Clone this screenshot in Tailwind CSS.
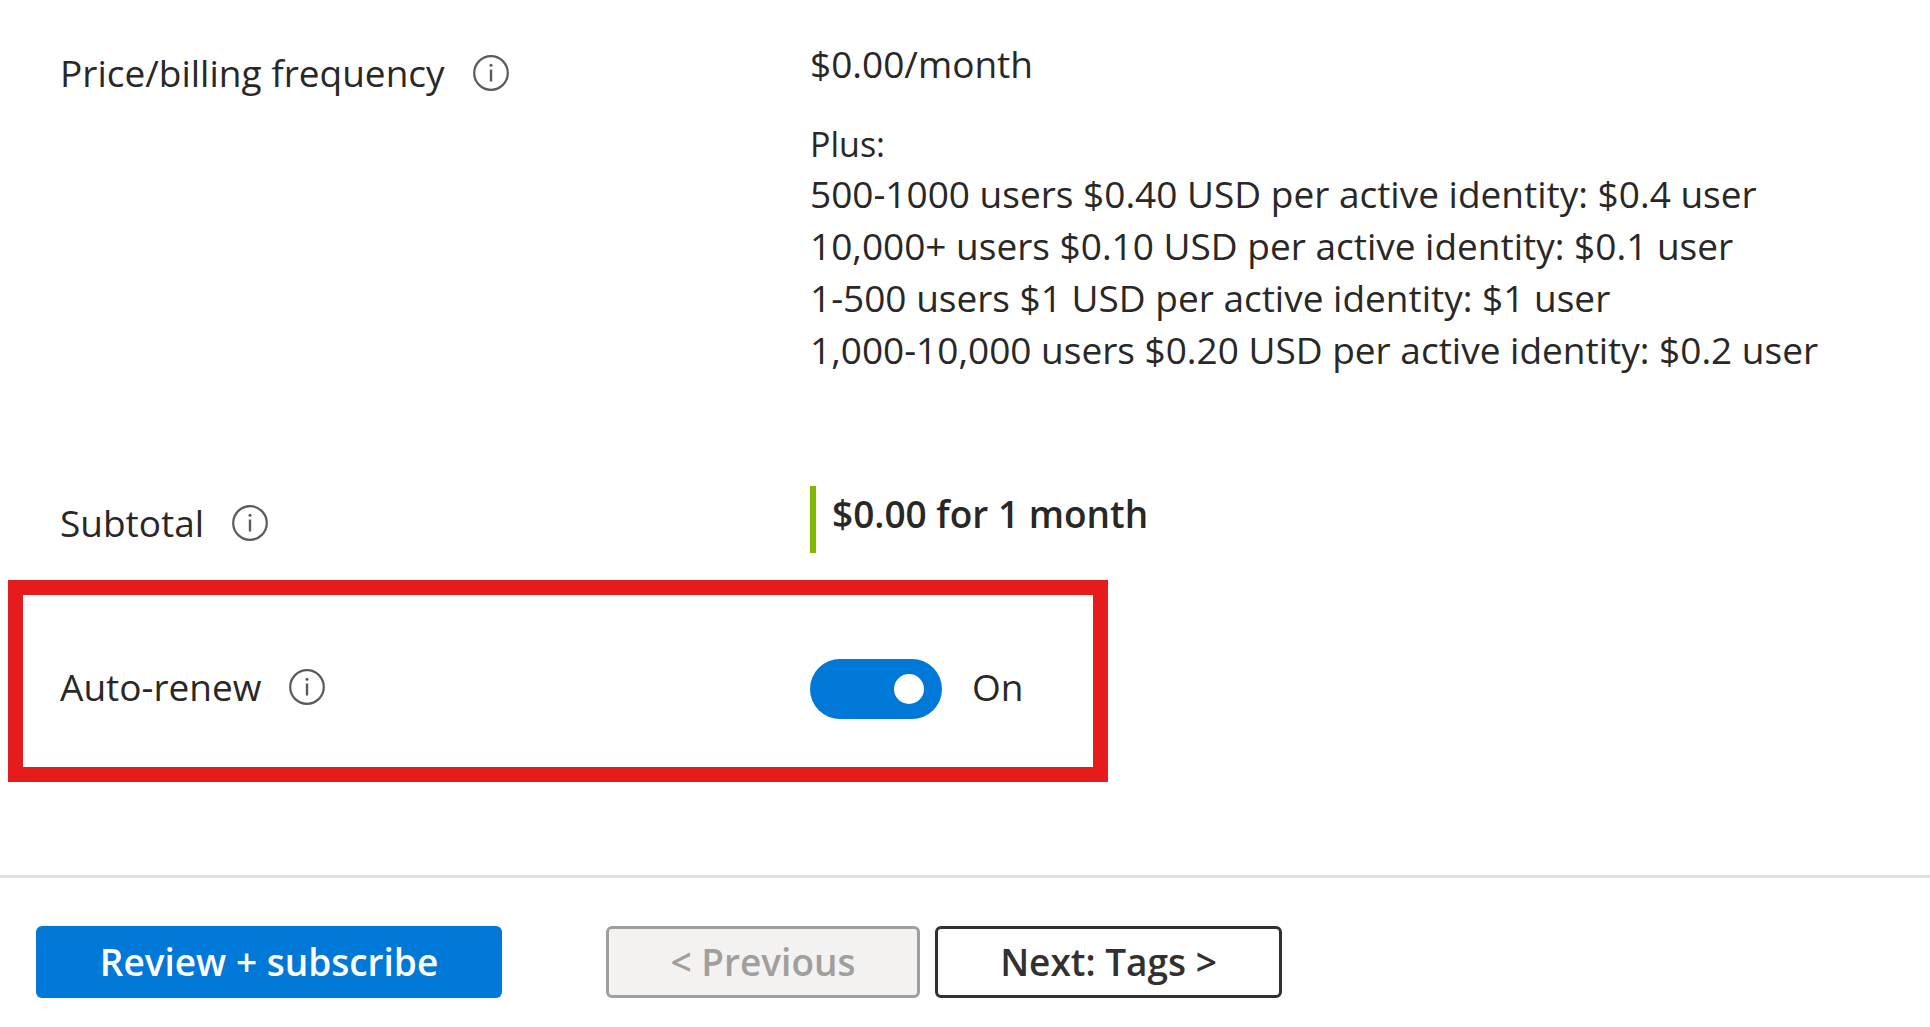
<!DOCTYPE html>
<html lang="en">
<head>
  <meta charset="UTF-8">
  <meta name="viewport" content="width=device-width, initial-scale=1.0">
  <title>Subscribe</title>
  <script src="https://cdn.jsdelivr.net/npm/@tailwindcss/browser@4"></script>
</head>
<body class="bg-white text-[#292827] font-['Open_Sans','Noto_Sans',sans-serif] text-[37px] leading-[52px]">
  <main>
    <!-- Price -->
    <section class="grid grid-cols-[750px_1fr] pl-[60px] pt-[38px]">
      <div class="flex items-center self-start gap-7 pt-[9px]">
        <h2>Price/billing frequency</h2>
        <svg class="size-9" viewBox="0 0 36 36" fill="none" role="img" aria-label="Info">
          <circle cx="18" cy="18" r="16.8" stroke="#5c5b5a" stroke-width="2.2"/>
          <circle cx="18" cy="10.3" r="1.5" fill="#5c5b5a"/>
          <path d="M18 14.5V26.5" stroke="#5c5b5a" stroke-width="2.4"/>
        </svg>
      </div>
      <div>
        <p>$0.00/month</p>
        <p class="mt-7 text-[34px] leading-[52px]">Plus:</p>
        <ul class="-mt-[2px]">
          <li>500-1000 users $0.40 USD per active identity: $0.4 user</li>
          <li>10,000+ users $0.10 USD per active identity: $0.1 user</li>
          <li>1-500 users $1 USD per active identity: $1 user</li>
          <li>1,000-10,000 users $0.20 USD per active identity: $0.2 user</li>
        </ul>
      </div>
    </section>

    <!-- Subtotal -->
    <section class="grid grid-cols-[750px_1fr] pl-[60px] mt-[110px]">
      <div class="flex items-center self-start gap-7 pt-[11px]">
        <h2>Subtotal</h2>
        <svg class="size-9" viewBox="0 0 36 36" fill="none" role="img" aria-label="Info">
          <circle cx="18" cy="18" r="16.8" stroke="#5c5b5a" stroke-width="2.2"/>
          <circle cx="18" cy="10.3" r="1.5" fill="#5c5b5a"/>
          <path d="M18 14.5V26.5" stroke="#5c5b5a" stroke-width="2.4"/>
        </svg>
      </div>
      <p class="h-[67px] border-l-6 border-[#7fba00] pl-4 pt-[2px] font-semibold">$0.00 for 1 month</p>
    </section>

    <!-- Auto-renew -->
    <section class="ml-2 mt-[27px] max-w-[1100px] border-[15px] border-[#e61c1c] grid grid-cols-[750px_1fr] items-center pl-[37px] pt-16 pb-12">
      <div class="flex items-center gap-7 pb-1">
        <label for="auto-renew">Auto-renew</label>
        <svg class="size-9" viewBox="0 0 36 36" fill="none" role="img" aria-label="Info">
          <circle cx="18" cy="18" r="16.8" stroke="#5c5b5a" stroke-width="2.2"/>
          <circle cx="18" cy="10.3" r="1.5" fill="#5c5b5a"/>
          <path d="M18 14.5V26.5" stroke="#5c5b5a" stroke-width="2.4"/>
        </svg>
      </div>
      <div class="flex items-center gap-[30px]">
        <input id="auto-renew" type="checkbox" role="switch" checked class="peer appearance-none w-[132px] h-[60px] rounded-full bg-[#8a8886] checked:bg-[#0078d7] flex items-center px-[18px] checked:justify-end before:size-[30px] before:rounded-full before:bg-white before:content-['']">
        <span class="hidden pb-1 peer-checked:inline">On</span>
        <span class="pb-1 peer-checked:hidden">Off</span>
      </div>
    </section>
  </main>

  <footer class="mt-[93px] border-t-3 border-[#dfdfde] flex px-9 pt-12 font-semibold">
    <button type="button" class="w-[466px] h-[72px] rounded-md bg-[#0078d7] text-white">Review + subscribe</button>
    <button type="button" disabled class="ml-[104px] w-[314px] h-[72px] rounded-md border-3 border-[#a19f9d] bg-[#f3f2f1] text-[#a19f9d]">&lt; Previous</button>
    <button type="button" class="ml-[15px] w-[347px] h-[72px] rounded-md border-3 border-[#323130] bg-white text-[#323130]">Next: Tags &gt;</button>
  </footer>
</body>
</html>
